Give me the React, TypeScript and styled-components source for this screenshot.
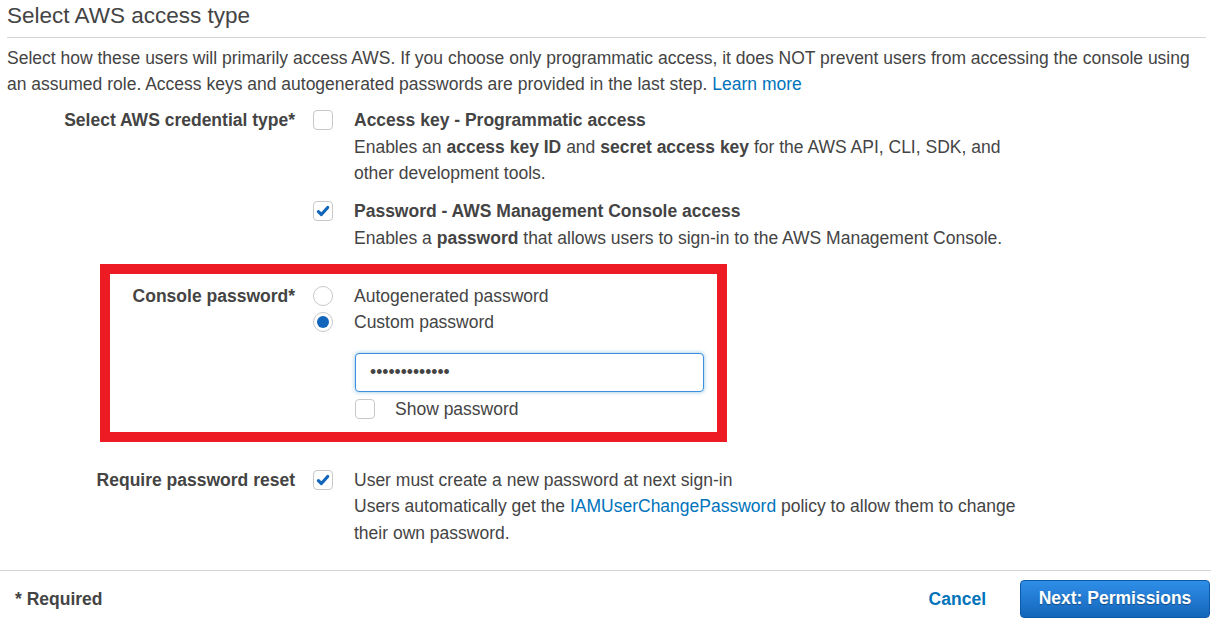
import React from "react";
import styled, { createGlobalStyle } from "styled-components";

const GlobalStyle = createGlobalStyle`
  html, body {
    margin: 0;
    padding: 0;
    background: #ffffff;
  }
  body {
    font-family: "Liberation Sans", Arial, sans-serif;
    font-size: 17.5px;
    color: #444444;
  }
  * { box-sizing: border-box; }
`;

const Page = styled.div`
  width: 1211px;
  height: 619px;
  overflow: hidden;
  background: #fff;
`;

const Header = styled.div`
  margin: 0 5px 0 7px;
  padding: 2px 0 7px 0;
  border-bottom: 1px solid #d5d5d5;
`;

const Title = styled.h2`
  margin: 0;
  font-size: 22.5px;
  line-height: 28px;
  font-weight: normal;
  color: #444;
`;

const Intro = styled.p`
  margin: 7px 5px 0 7px;
  line-height: 26px;
  color: #444;
`;

const Link = styled.a<{ $bold?: boolean }>`
  color: #0073bb;
  text-decoration: none;
  font-weight: ${(p) => (p.$bold ? "bold" : "normal")};
  cursor: pointer;
`;

const Fields = styled.div`
  margin-top: 10px;
`;

const FieldRow = styled.div<{ $labelWidth: number; $mt?: number }>`
  display: grid;
  grid-template-columns: ${(p) => p.$labelWidth}px 1fr;
  column-gap: 18px;
  margin-top: ${(p) => p.$mt ?? 0}px;
  line-height: 26.5px;
`;

const FieldLabel = styled.div`
  text-align: right;
  font-weight: bold;
  color: #444;
`;

const Options = styled.div<{ $gap?: number }>`
  display: flex;
  flex-direction: column;
  gap: ${(p) => p.$gap ?? 0}px;
`;

const Option = styled.div<{ $gap?: number }>`
  display: flex;
  align-items: flex-start;
  gap: ${(p) => p.$gap ?? 21}px;
`;

const OptionBody = styled.div`
  max-width: 676px;
`;

const OptionTitle = styled.div`
  font-weight: bold;
`;

const Box = styled.span<{ $checked?: boolean }>`
  flex: none;
  width: 20px;
  height: 20px;
  margin-top: 3px;
  border: 1px solid #c8c8c8;
  border-radius: 4px;
  background: #fff;
  display: flex;
  align-items: center;
  justify-content: center;
`;

const Radio = styled.span<{ $checked?: boolean }>`
  flex: none;
  width: 20px;
  height: 20px;
  margin-top: 3px;
  border: 1px solid #c8c8c8;
  border-radius: 50%;
  background: #fff;
  display: flex;
  align-items: center;
  justify-content: center;
  &::after {
    content: "";
    display: ${(p) => (p.$checked ? "block" : "none")};
    width: 12px;
    height: 12px;
    border-radius: 50%;
    background: #1166bb;
  }
`;

const Highlight = styled.div`
  margin: 12.5px 0 0 100px;
  width: 627px;
  border: 10px solid #ed1c24;
  padding: 9px 0 10px 0;
`;

const PasswordInput = styled.input`
  display: block;
  margin: 17px 0 0 42px;
  width: 349px;
  height: 39px;
  padding: 0 14px;
  border: 1px solid #3d8ee0;
  border-radius: 4px;
  box-shadow: 0 0 4px rgba(0, 115, 187, 0.45);
  font-family: "Liberation Sans", Arial, sans-serif;
  font-size: 17.5px;
  color: #444;
  outline: none;
  background: #fff;
`;

const ShowRow = styled.div`
  display: flex;
  align-items: flex-start;
  gap: 20px;
  margin: 4px 0 0 42px;
  line-height: 26px;
`;

const Footer = styled.div`
  margin-top: 23.5px;
  border-top: 1px solid #d5d5d5;
  padding: 9px 1px 0 15px;
  display: flex;
  align-items: center;
  justify-content: space-between;
  line-height: 38px;
`;

const Required = styled.div`
  font-weight: bold;
  color: #444;
`;

const Actions = styled.div`
  display: flex;
  align-items: center;
  gap: 34px;
`;

const PrimaryButton = styled.button`
  height: 38px;
  width: 190px;
  padding: 0;
  border: 1px solid #0f5aa6;
  border-radius: 4px;
  background: linear-gradient(#2f8ee8, #1466b9);
  color: #fff;
  font-family: "Liberation Sans", Arial, sans-serif;
  font-size: 17.5px;
  font-weight: bold;
  text-shadow: 0 1px 1px rgba(0, 0, 0, 0.35);
  cursor: pointer;
`;

const Check = () => (
  <svg width="14" height="14" viewBox="0 0 14 14">
    <path
      d="M2.4 7.6 L5.4 10.5 L11.7 3.5"
      fill="none"
      stroke="#1166bb"
      strokeWidth="3.2"
      strokeLinecap="round"
      strokeLinejoin="round"
    />
  </svg>
);

const Checkbox = ({ checked }: { checked?: boolean }) => (
  <Box $checked={checked}>{checked ? <Check /> : null}</Box>
);

export default function App() {
  return (
    <Page>
      <GlobalStyle />
      <Header>
        <Title>Select AWS access type</Title>
      </Header>
      <Intro>
        Select how these users will primarily access AWS. If you choose only programmatic access, it does NOT prevent
        users from accessing the console using an assumed role. Access keys and autogenerated passwords are provided in
        the last step. <Link>Learn more</Link>
      </Intro>

      <Fields>
        <FieldRow $labelWidth={295}>
          <FieldLabel>Select AWS credential type*</FieldLabel>
          <Options $gap={11.5}>
            <Option>
              <Checkbox />
              <OptionBody>
                <OptionTitle>Access key - Programmatic access</OptionTitle>
                Enables an <b>access key ID</b> and <b>secret access key</b> for the AWS API, CLI, SDK, and other
                development tools.
              </OptionBody>
            </Option>
            <Option>
              <Checkbox checked />
              <OptionBody>
                <OptionTitle>Password - AWS Management Console access</OptionTitle>
                Enables a <b>password</b> that allows users to sign-in to the AWS Management Console.
              </OptionBody>
            </Option>
          </Options>
        </FieldRow>

        <Highlight>
          <FieldRow $labelWidth={185}>
            <FieldLabel>Console password*</FieldLabel>
            <div>
              <Options>
                <Option>
                  <Radio />
                  <span>Autogenerated password</span>
                </Option>
                <Option>
                  <Radio $checked />
                  <span>Custom password</span>
                </Option>
              </Options>
              <PasswordInput type="password" defaultValue="abcdefghijklm" readOnly />
              <ShowRow>
                <Checkbox />
                <span>Show password</span>
              </ShowRow>
            </div>
          </FieldRow>
        </Highlight>

        <FieldRow $labelWidth={295} $mt={25}>
          <FieldLabel>Require password reset</FieldLabel>
          <Option>
            <Checkbox checked />
            <OptionBody>
              User must create a new password at next sign-in
              <br />
              Users automatically get the <Link>IAMUserChangePassword</Link> policy to allow them to change their own
              password.
            </OptionBody>
          </Option>
        </FieldRow>
      </Fields>

      <Footer>
        <Required>* Required</Required>
        <Actions>
          <Link $bold>Cancel</Link>
          <PrimaryButton>Next: Permissions</PrimaryButton>
        </Actions>
      </Footer>
    </Page>
  );
}
